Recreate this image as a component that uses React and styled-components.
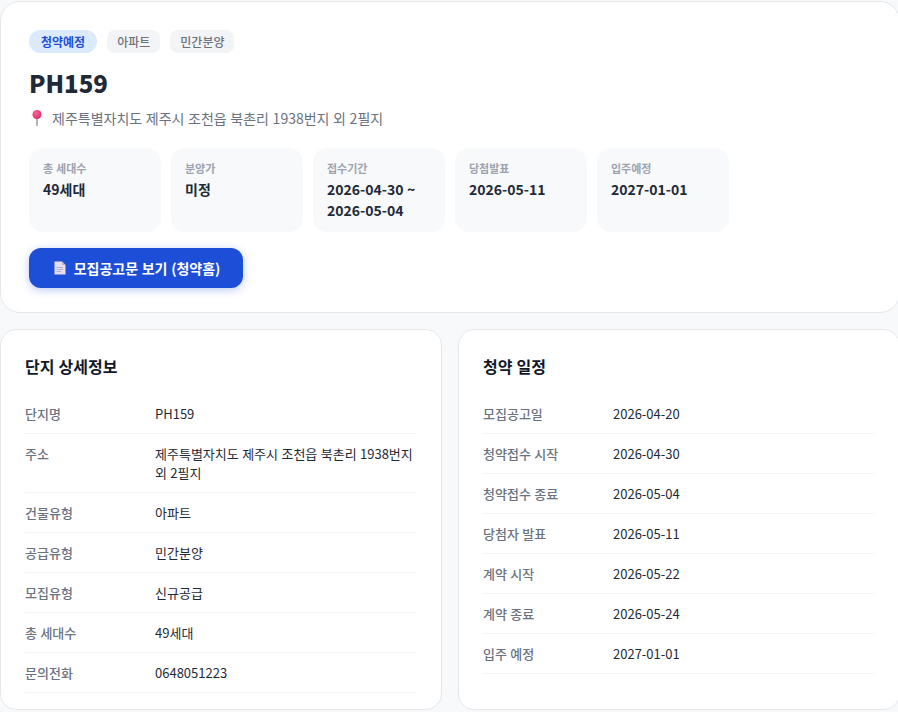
import React from 'react'
import styled, { createGlobalStyle } from 'styled-components'

const stats = [
  { label: '총 세대수', value: '49세대' },
  { label: '분양가', value: '미정' },
  { label: '접수기간', value: '2026-04-30 ~ 2026-05-04' },
  { label: '당첨발표', value: '2026-05-11' },
  { label: '입주예정', value: '2027-01-01' },
]

const details = [
  ['단지명', 'PH159'],
  ['주소', '제주특별자치도 제주시 조천읍 북촌리 1938번지 외 2필지'],
  ['건물유형', '아파트'],
  ['공급유형', '민간분양'],
  ['모집유형', '신규공급'],
  ['총 세대수', '49세대'],
  ['문의전화', '0648051223'],
]

const schedule = [
  ['모집공고일', '2026-04-20'],
  ['청약접수 시작', '2026-04-30'],
  ['청약접수 종료', '2026-05-04'],
  ['당첨자 발표', '2026-05-11'],
  ['계약 시작', '2026-05-22'],
  ['계약 종료', '2026-05-24'],
  ['입주 예정', '2027-01-01'],
]

const PinIcon = () => (
  <svg width='16' height='18' viewBox='0 0 16 18'>
    <defs>
      <radialGradient id='pinHead' cx='0.4' cy='0.35' r='0.7'>
        <stop offset='0' stopColor='#f76a9c' />
        <stop offset='1' stopColor='#e0245e' />
      </radialGradient>
    </defs>
    <rect x='7' y='7' width='2' height='10' fill='#b4b4bc' />
    <circle cx='8' cy='5.5' r='4.5' fill='url(#pinHead)' />
  </svg>
)

const DocIcon = () => (
  <svg width='12' height='14' viewBox='0 0 12 14'>
    <path d='M0.5 0.5H8L11.5 4V13.5H0.5Z' fill='#e4deee' />
    <path d='M8 0.5L11.5 4H8Z' fill='#bdb4cf' />
    <path d='M2.5 6.5H9M2.5 8.5H9M2.5 10.5H7' stroke='#b5adc6' strokeWidth='1' />
  </svg>
)

const InfoTable = ({ rows }) => (
  <div>
    {rows.map(([key, value]) => (
      <Row key={key}>
        <RowKey>{key}</RowKey>
        <RowValue>{value}</RowValue>
      </Row>
    ))}
  </div>
)

export default function App() {
  return (
    <>
      <GlobalStyle />
      <Page>
        <Hero>
          <Badges>
            <StatusBadge>청약예정</StatusBadge>
            <Badge>아파트</Badge>
            <Badge>민간분양</Badge>
          </Badges>
          <Title>PH159</Title>
          <Address>
            <PinIcon />
            제주특별자치도 제주시 조천읍 북촌리 1938번지 외 2필지
          </Address>
          <Stats>
            {stats.map((stat) => (
              <Stat key={stat.label}>
                <StatLabel>{stat.label}</StatLabel>
                <StatValue>{stat.value}</StatValue>
              </Stat>
            ))}
          </Stats>
          <NoticeButton>
            <DocIcon />
            모집공고문 보기 (청약홈)
          </NoticeButton>
        </Hero>
        <Columns>
          <Card>
            <CardTitle>단지 상세정보</CardTitle>
            <InfoTable rows={details} />
          </Card>
          <Card>
            <CardTitle>청약 일정</CardTitle>
            <InfoTable rows={schedule} />
          </Card>
        </Columns>
      </Page>
    </>
  )
}

const GlobalStyle = createGlobalStyle`
  * {
    box-sizing: border-box;
  }
  html, body {
    margin: 0;
    background: #f8f9fb;
    overflow-x: hidden;
  }
  body {
    font-family: "Noto Sans CJK KR", "Noto Sans", sans-serif;
    color: #1f2937;
    font-kerning: none;
    word-spacing: 0.5px;
  }
`

const Page = styled.div`
  width: 900px;
  padding-top: 1px;
  display: flex;
  flex-direction: column;
  gap: 16px;
`

const Hero = styled.section`
  background: #fff;
  border: 1px solid #e5e7eb;
  border-radius: 20px;
  padding: 28px;
  height: 312px;
`

const Badges = styled.div`
  display: flex;
  gap: 10px;
  margin-bottom: 11px;
`

const Badge = styled.span`
  height: 23px;
  padding: 0 10px;
  display: flex;
  align-items: center;
  border-radius: 8px;
  background: #f3f4f6;
  color: #6b7280;
  font-size: 12px;
  font-weight: 500;
`

const StatusBadge = styled(Badge)`
  padding: 0 12px;
  border-radius: 12px;
  background: #dbeafe;
  color: #1d4ed8;
  font-weight: 700;
`

const Title = styled.h1`
  margin: 0 0 5px;
  font-size: 24px;
  line-height: 38px;
  font-weight: 800;
  color: #1f2937;
`

const Address = styled.div`
  display: flex;
  align-items: center;
  gap: 7px;
  margin-bottom: 19px;
  font-size: 14px;
  line-height: 22px;
  color: #6b7280;
`

const Stats = styled.div`
  display: flex;
  gap: 10px;
  margin-bottom: 16px;
`

const Stat = styled.div`
  width: 132px;
  height: 84px;
  padding: 11px 14px;
  background: #f8f9fb;
  border-radius: 14px;
`

const StatLabel = styled.div`
  font-size: 11px;
  line-height: 18px;
  font-weight: 600;
  color: #9ca3af;
  margin-bottom: 2px;
`

const StatValue = styled.div`
  font-size: 14px;
  line-height: 21px;
  font-weight: 700;
  color: #1f2937;
`

const NoticeButton = styled.button`
  width: 214px;
  height: 40px;
  padding: 0 0 0 2px;
  display: flex;
  align-items: center;
  justify-content: center;
  gap: 8px;
  border: none;
  border-radius: 12px;
  background: #1d4ed8;
  color: #fff;
  font-family: inherit;
  font-size: 14px;
  font-weight: 700;
  word-spacing: inherit;
  box-shadow: 0 2px 8px rgba(29, 78, 216, 0.3);
`

const Columns = styled.div`
  display: grid;
  grid-template-columns: 442px 442px;
  gap: 16px;
  align-items: stretch;
`

const Card = styled.section`
  background: #fff;
  border: 1px solid #e5e7eb;
  border-radius: 16px;
  padding: 24px;
  height: 381px;
`

const CardTitle = styled.h2`
  margin: 0 0 16px;
  font-size: 16px;
  line-height: 24px;
  font-weight: 700;
  color: #111827;
`

const Row = styled.div`
  display: grid;
  grid-template-columns: 130px 1fr;
  padding: 10px 0;
  border-bottom: 1px solid #f3f4f6;
  font-size: 13px;
  line-height: 19px;
`

const RowKey = styled.div`
  color: #6b7280;
  font-weight: 500;
`

const RowValue = styled.div`
  color: #1f2937;
`
